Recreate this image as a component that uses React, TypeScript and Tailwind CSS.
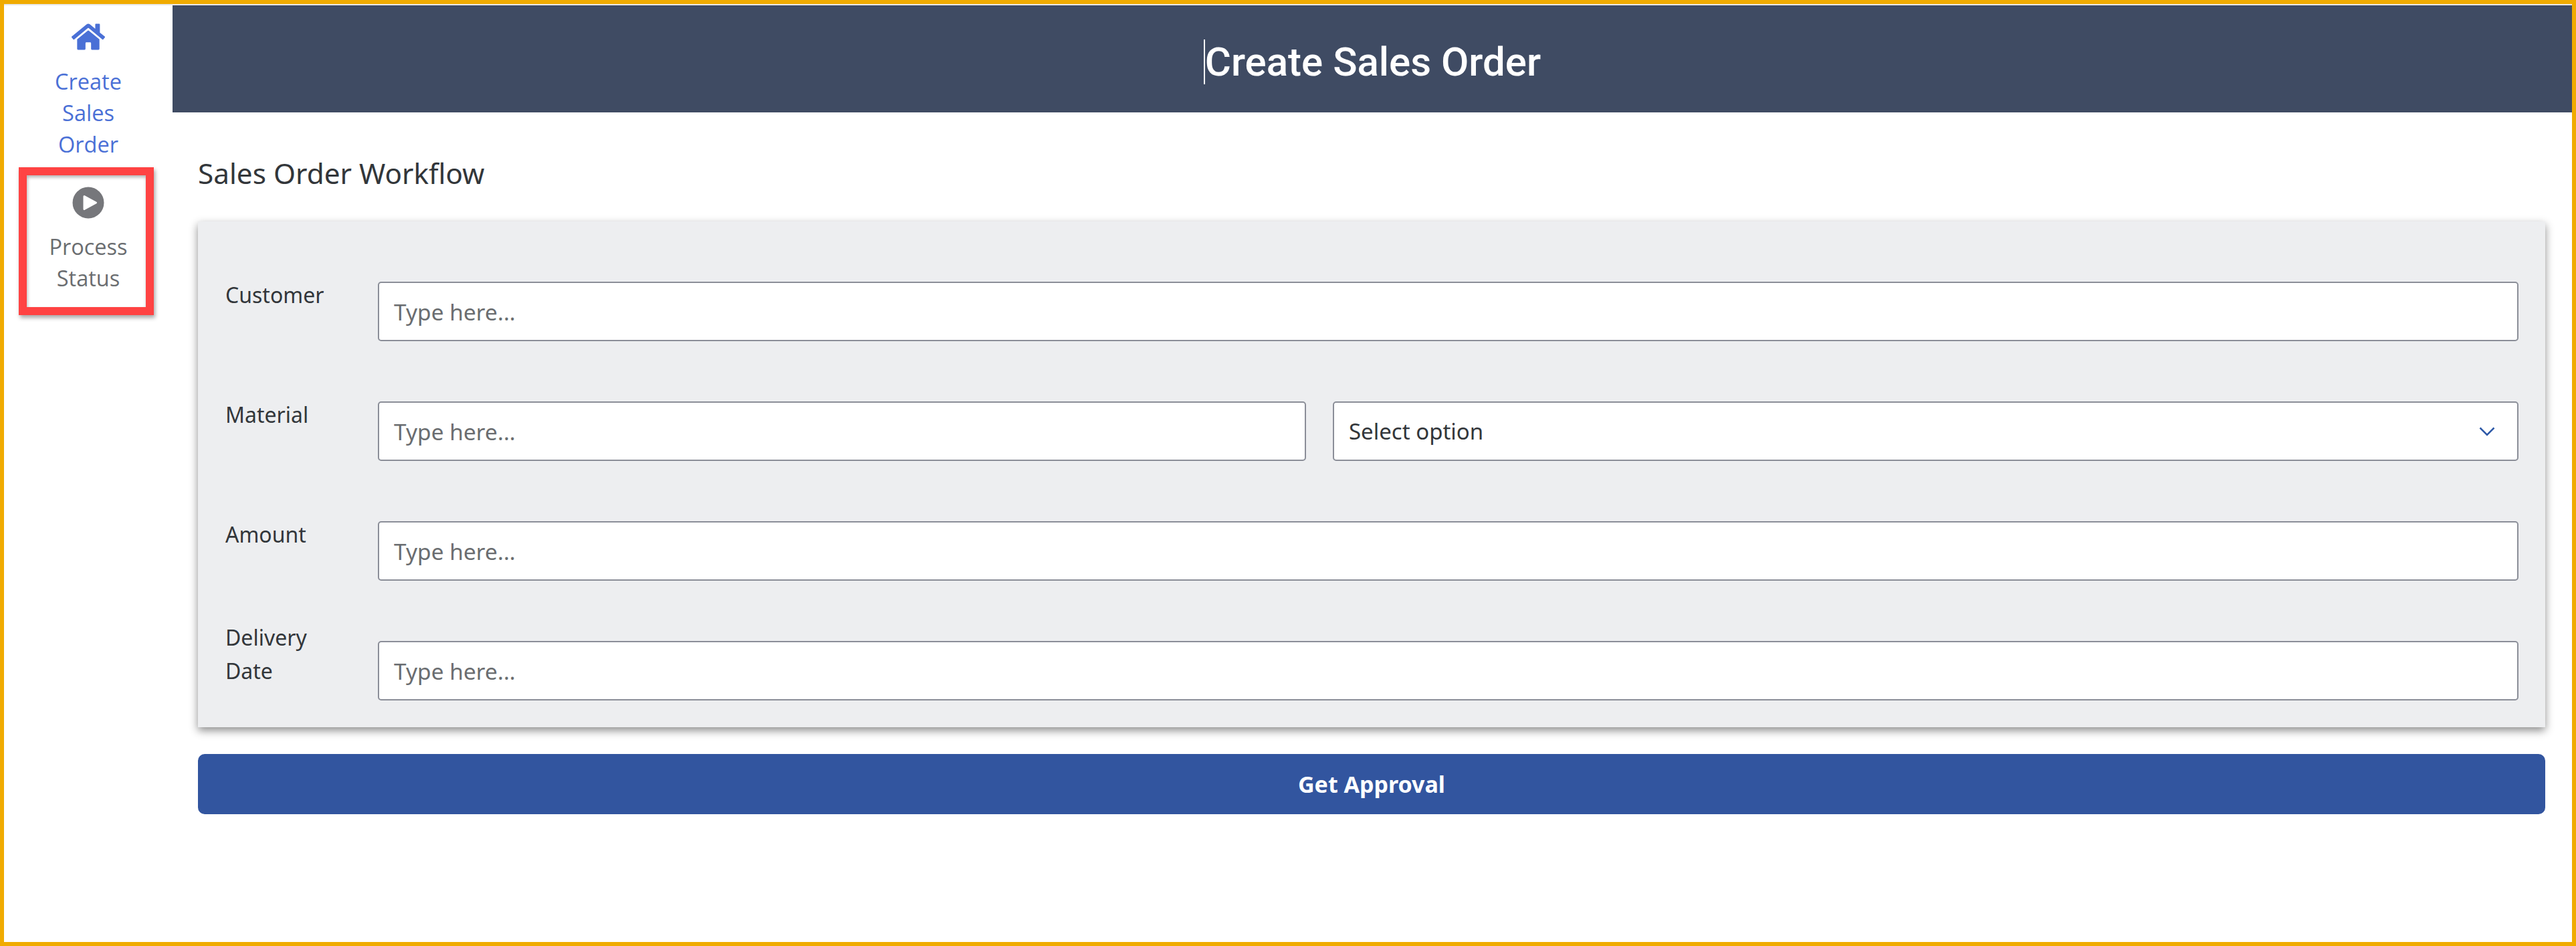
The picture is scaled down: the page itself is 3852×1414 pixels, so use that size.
import React from 'react';
import { FaHome } from 'react-icons/fa';

const bodyFont = "font-['Noto_Sans','Open_Sans',sans-serif]";

function PlayIcon() {
  return (
    <svg width="48" height="48" viewBox="0 0 48 48" className="block">
      <circle cx="24" cy="24" r="23.5" fill="#76777b" />
      <path d="M18 14.5 L35.5 24 L18 33.5 Z" fill="#ffffff" stroke="#ffffff" strokeWidth="3" strokeLinejoin="round" />
    </svg>
  );
}

function TextField() {
  return (
    <input
      placeholder="Type here..."
      className="block h-[89px] w-full min-w-0 rounded-[5px] border-2 border-[#8b8e98] bg-white px-[22px] text-[33.5px] text-[#32363a] outline-none placeholder:text-[#6a6d70]"
    />
  );
}

function Row({ label, children }: { label: React.ReactNode; children: React.ReactNode }) {
  return (
    <div className="flex h-[89px] items-start">
      <div className="flex h-[89px] w-[228px] shrink-0 items-center pb-[50px] text-[32px] leading-[50px] text-[#32363a]">
        <span>{label}</span>
      </div>
      <div className="flex min-w-0 flex-1 gap-[40px]">{children}</div>
    </div>
  );
}

export default function App() {
  return (
    <div className={`flex h-[1414px] w-[3852px] flex-col overflow-hidden border-[6px] border-[#f0ab00] bg-white ${bodyFont}`}>
      <div className="h-[2px] shrink-0 bg-[#e8e8e8]" />
      <div className="flex min-h-0 flex-1">
        {/* Left nav */}
        <aside className="relative w-[252px] shrink-0 font-['Open_Sans',sans-serif] text-[32.5px] leading-[47px]">
          <div className="flex flex-col items-center pt-[22px] text-[#4a70d6]">
            <FaHome className="h-[50px] w-[50px]" />
            <div className="mt-[18px] text-center">
              Create
              <br />
              Sales
              <br />
              Order
            </div>
          </div>
          <div className="mt-[40px] flex flex-col items-center text-[#6a6d70]">
            <PlayIcon />
            <div className="mt-[18px] text-center">
              Process
              <br />
              Status
            </div>
          </div>
          {/* Red highlight drawn over the screenshot */}
          <div className="absolute left-[22px] top-[242px] h-[221px] w-[202px] border-[12px] border-[#ff4343] shadow-[2px_4px_6px_rgba(0,0,0,0.35),inset_1px_3px_5px_rgba(0,0,0,0.3)]" />
        </aside>

        <main className="flex min-w-0 flex-1 flex-col">
          <header className="flex h-[160px] shrink-0 items-center justify-center bg-[#3f4b63] pt-[9px] font-['Roboto',sans-serif] text-white">
            <span className="h-[67px] w-[2px] bg-white" />
            <h1 className="text-[60px] font-medium leading-none">Create Sales Order</h1>
          </header>

          <div className="flex flex-col pl-[38px] pr-[40px]">
            <h2 className="mt-[62px] text-[42.3px] leading-[57px] text-[#32363a]">Sales Order Workflow</h2>

            <section className="mt-[44px] flex h-[756px] flex-col gap-[90px] bg-[#edeef0] pl-[41px] pr-[40px] pt-[90px] shadow-[0_5px_12px_rgba(0,0,0,0.45)]">
              <Row label="Customer">
                <TextField />
              </Row>
              <Row label="Material">
                <div className="w-[1388px] shrink-0">
                  <TextField />
                </div>
                <div className="flex h-[89px] min-w-0 flex-1 items-center justify-between rounded-[5px] border-2 border-[#8b8e98] bg-white pl-[22px] pr-[33px] text-[33px] text-[#32363a]">
                  <span>Select option</span>
                  <svg width="24" height="14" viewBox="0 0 24 14" fill="none">
                    <path d="M1.5 1.5 L12 12 L22.5 1.5" stroke="#2f5aa8" strokeWidth="2.5" />
                  </svg>
                </div>
              </Row>
              <Row label="Amount">
                <TextField />
              </Row>
              <Row
                label={
                  <>
                    Delivery
                    <br />
                    Date
                  </>
                }
              >
                <TextField />
              </Row>
            </section>

            <button className="mt-[40px] h-[90px] w-full rounded-[10px] bg-[#32559f] text-[34px] font-bold text-white">
              Get Approval
            </button>
          </div>
        </main>
      </div>
    </div>
  );
}
